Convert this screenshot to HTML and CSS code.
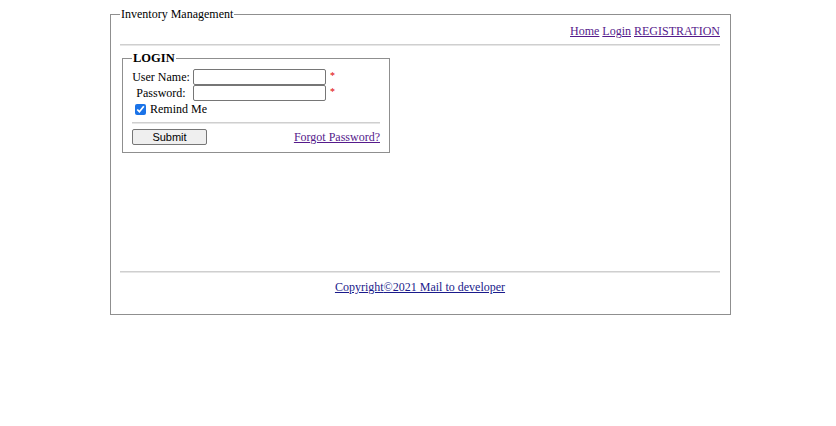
FILE: index.html
```html
<!DOCTYPE html>
<html>
<head>
<meta charset="utf-8">
<link rel="stylesheet" href="styles.css">
</head>
<body>
<fieldset class="outer">
  <legend class="outer-legend">Inventory Management</legend>
  <nav class="nav"><a href="#">Home</a> <a href="#">Login</a> <a href="#">REGISTRATION</a></nav>
  <hr class="rule">
  <main class="main">
    <fieldset class="login">
      <legend class="login-legend">LOGIN</legend>
      <div class="row">
        <label class="lbl">User Name:</label>
        <input class="field" type="text">
        <span class="req">*</span>
      </div>
      <div class="row">
        <label class="lbl">Password:</label>
        <input class="field" type="password">
        <span class="req">*</span>
      </div>
      <div class="remind">
        <input class="check" type="checkbox" checked>
        <span>Remind Me</span>
      </div>
      <hr class="rule small-rule">
      <div class="actions">
        <button class="submit" type="button">Submit</button>
        <a class="forgot" href="#">Forgot Password?</a>
      </div>
    </fieldset>
  </main>
  <hr class="rule">
  <footer class="footer"><a class="copy" href="#">Copyright</a><a class="copy" href="#">©2021 Mail to developer</a></footer>
</fieldset>
</body>
</html>
```
FILE: styles.css
```css
html, body {
  margin: 0;
  padding: 0;
  background: #fff;
}
body {
  font-family: "Liberation Serif", "Times New Roman", serif;
  font-size: 12px;
  color: #000;
}
a {
  color: #551a8b;
  text-decoration: underline;
}
.outer {
  box-sizing: border-box;
  width: 621px;
  margin: 7px 0 0 110px;
  padding: 0 10px 0 9px;
  border: 1px solid #8f8f8f;
  height: 308px;
}
.outer-legend {
  padding: 0 1px;
  line-height: 14px;
}
.nav {
  text-align: right;
  line-height: 14px;
  margin-top: 3px;
}
.rule {
  border: 0;
  border-top: 1px solid #cfcfcf;
  border-bottom: 1px solid #e6e6e6;
  margin: 6px 0 0 0;
  height: 0;
}
.main {
  height: 214px;
}
.login {
  box-sizing: border-box;
  width: 268px;
  margin: 5px 0 0 2px;
  padding: 4px 9px 7px 9px;
  border: 1px solid #8f8f8f;
  height: 102px;
}
.login-legend {
  font-weight: bold;
  font-size: 12.5px;
  padding: 0 1px;
  line-height: 14px;
}
.row {
  display: flex;
  align-items: center;
  height: 16px;
}
.lbl {
  width: 58px;
  margin-right: 3px;
  text-align: center;
  white-space: nowrap;
}
.field {
  box-sizing: border-box;
  width: 133px;
  height: 16px;
  margin: 0;
  padding: 0 2px;
  border: 1px solid #767676;
  border-radius: 2px;
  font-size: 11px;
}
.req {
  color: #e00000;
  margin-left: 4px;
  font-size: 10px;
  line-height: 10px;
  align-self: flex-start;
  margin-top: 2px;
}
.remind {
  display: flex;
  align-items: center;
  height: 16px;
  padding-left: 3px;
}
.check {
  width: 11px;
  height: 11px;
  margin: 0 4px 0 0;
  accent-color: #1a73e8;
}
.small-rule {
  margin-top: 5px;
}
.actions {
  display: flex;
  justify-content: space-between;
  align-items: center;
  margin-top: 5px;
}
.submit {
  box-sizing: border-box;
  width: 75px;
  height: 16px;
  padding: 0;
  font-family: "Liberation Sans", Arial, sans-serif;
  font-size: 11px;
  background: #efefef;
  border: 1px solid #767676;
  border-radius: 2px;
  color: #000;
}
.footer {
  text-align: center;
  margin-top: 7px;
  line-height: 14px;
}
.copy {
  color: #1a1a8b;
}
```
